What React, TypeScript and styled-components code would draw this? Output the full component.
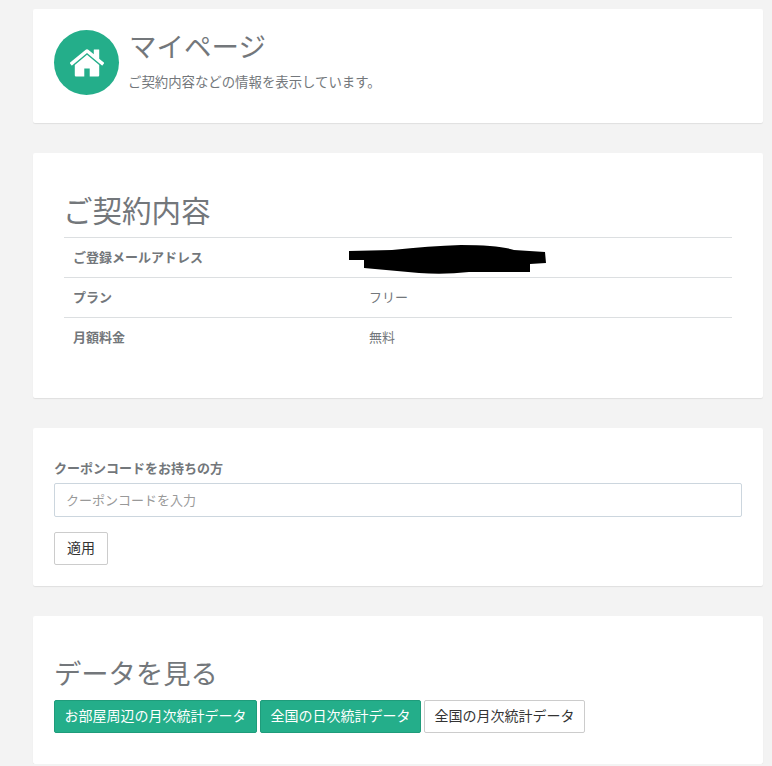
import React from "react";
import styled, { createGlobalStyle } from "styled-components";

const GlobalStyle = createGlobalStyle`
  html, body {
    margin: 0;
    padding: 0;
    background: #f3f3f3;
  }
  body {
    font-family: "Noto Sans CJK JP", "Liberation Sans", sans-serif;
    font-size: 13px;
    color: #73777b;
    overflow: hidden;
  }
`;

const Page = styled.div`
  display: flex;
  flex-direction: column;
  gap: 30px;
  padding: 9px 9px 0 33px;
`;

const Card = styled.section<{ $height: number; $padding: string }>`
  box-sizing: border-box;
  height: ${(p) => p.$height}px;
  padding: ${(p) => p.$padding};
  background: #fff;
  border-radius: 2px;
  box-shadow: 0 1px 1px rgba(0, 0, 0, 0.08);
`;

const Header = styled.div`
  display: flex;
  gap: 10px;
`;

const Badge = styled.div`
  flex: none;
  display: flex;
  align-items: center;
  justify-content: center;
  width: 65px;
  height: 65px;
  border-radius: 50%;
  background: #24ae8a;
`;

const HomeIcon = styled.svg`
  width: 38px;
  height: 38px;
  fill: #fff;
`;

const HeaderText = styled.div`
  display: flex;
  flex-direction: column;
  margin-top: -1px;
`;

const PageTitle = styled.h1`
  margin: 0;
  font-size: 27.5px;
  line-height: 32px;
  font-weight: 400;
`;

const Sub = styled.p`
  margin: 11px 0 0 -1px;
  font-size: 13.4px;
  line-height: 18px;
`;

const SectionTitle = styled.h2`
  margin: 0 0 0 -1px;
  font-size: 29.5px;
  line-height: 40px;
  font-weight: 400;
`;

const DataTitle = styled(SectionTitle)`
  margin-left: 0;
  font-size: 27.3px;
`;

const Table = styled.div`
  margin-top: 8px;
`;

const Row = styled.div`
  display: grid;
  grid-template-columns: 296px 1fr;
  align-items: center;
  height: 40px;
  box-sizing: border-box;
  padding: 0 0 2px 9px;
  border-top: 1px solid #dcdfe1;
`;

const Key = styled.div`
  font-weight: 700;
`;

const Value = styled.div`
  position: relative;
`;

const Blot = styled.svg`
  position: absolute;
  left: -20px;
  top: -11.5px;
  width: 198px;
  height: 29px;
`;

const Label = styled.label`
  display: block;
  font-weight: 700;
  font-size: 13px;
  line-height: 18px;
`;

const CouponInput = styled.input`
  display: block;
  box-sizing: border-box;
  width: 100%;
  height: 34px;
  margin-top: 6px;
  padding: 0 11px 2px;
  font: inherit;
  font-size: 13px;
  color: #555;
  border: 1px solid #ccd6de;
  border-radius: 2px;
  outline: none;
  &::placeholder {
    color: #999;
    opacity: 1;
  }
`;

const Button = styled.button<{ $green?: boolean }>`
  box-sizing: border-box;
  height: 33px;
  padding: 0 9.5px 3px;
  font-family: inherit;
  font-size: 14px;
  color: ${(p) => (p.$green ? "#fff" : "#333")};
  background: ${(p) => (p.$green ? "#24ae8a" : "#fff")};
  border: 1px solid ${(p) => (p.$green ? "#1f9c7b" : "#ccc")};
  border-radius: 2px;
`;

const ApplyButton = styled(Button)`
  display: block;
  margin-top: 15px;
  padding: 0 12px 3px;
`;

const ButtonRow = styled.div`
  display: flex;
  gap: 3px;
  margin-top: 8px;
`;

export default function App() {
  return (
    <>
      <GlobalStyle />
      <Page>
        <Card $height={114} $padding="21px">
          <Header>
            <Badge>
              <HomeIcon viewBox="0 0 1792 1792">
                <path d="M1472 992v480q0 26-19 45t-45 19h-384v-384h-256v384h-384q-26 0-45-19t-19-45v-480q0-1 .5-3t.5-3l575-474 575 474q1 2 1 6zm223-69l-62 74q-8 9-21 11h-3q-13 0-21-7l-692-577-692 577q-12 8-24 7-13-2-21-11l-62-74q-8-10-7-23.500t11-21.500l719-599q32-26 76-26t76 26l244 204v-195q0-14 9-23t23-9h192q14 0 23 9t9 23v408l219 182q10 8 11 21.500t-7 23.500z" />
              </HomeIcon>
            </Badge>
            <HeaderText>
              <PageTitle>マイページ</PageTitle>
              <Sub>ご契約内容などの情報を表示しています。</Sub>
            </HeaderText>
          </Header>
        </Card>

        <Card $height={245} $padding="36px 31px 0">
          <SectionTitle>ご契約内容</SectionTitle>
          <Table>
            <Row>
              <Key>ご登録メールアドレス</Key>
              <Value>
                <Blot viewBox="0 0 198 29">
                  <path
                    d="M0 6 L43 5 Q80 1 112 0 Q150 0 165 5 L196 7 L197 18 L181 19 L181 27 L120 27 Q95 30 70 28 L15 23 L15 15 L0 15 Z"
                    fill="#000"
                  />
                </Blot>
              </Value>
            </Row>
            <Row>
              <Key>プラン</Key>
              <Value>フリー</Value>
            </Row>
            <Row>
              <Key>月額料金</Key>
              <Value>無料</Value>
            </Row>
          </Table>
        </Card>

        <Card $height={158} $padding="31px 21px 0">
          <Label htmlFor="coupon">クーポンコードをお持ちの方</Label>
          <CouponInput id="coupon" placeholder="クーポンコードを入力" />
          <ApplyButton>適用</ApplyButton>
        </Card>

        <Card $height={148} $padding="36px 21px 0">
          <DataTitle>データを見る</DataTitle>
          <ButtonRow>
            <Button $green>お部屋周辺の月次統計データ</Button>
            <Button $green>全国の日次統計データ</Button>
            <Button>全国の月次統計データ</Button>
          </ButtonRow>
        </Card>
      </Page>
    </>
  );
}
